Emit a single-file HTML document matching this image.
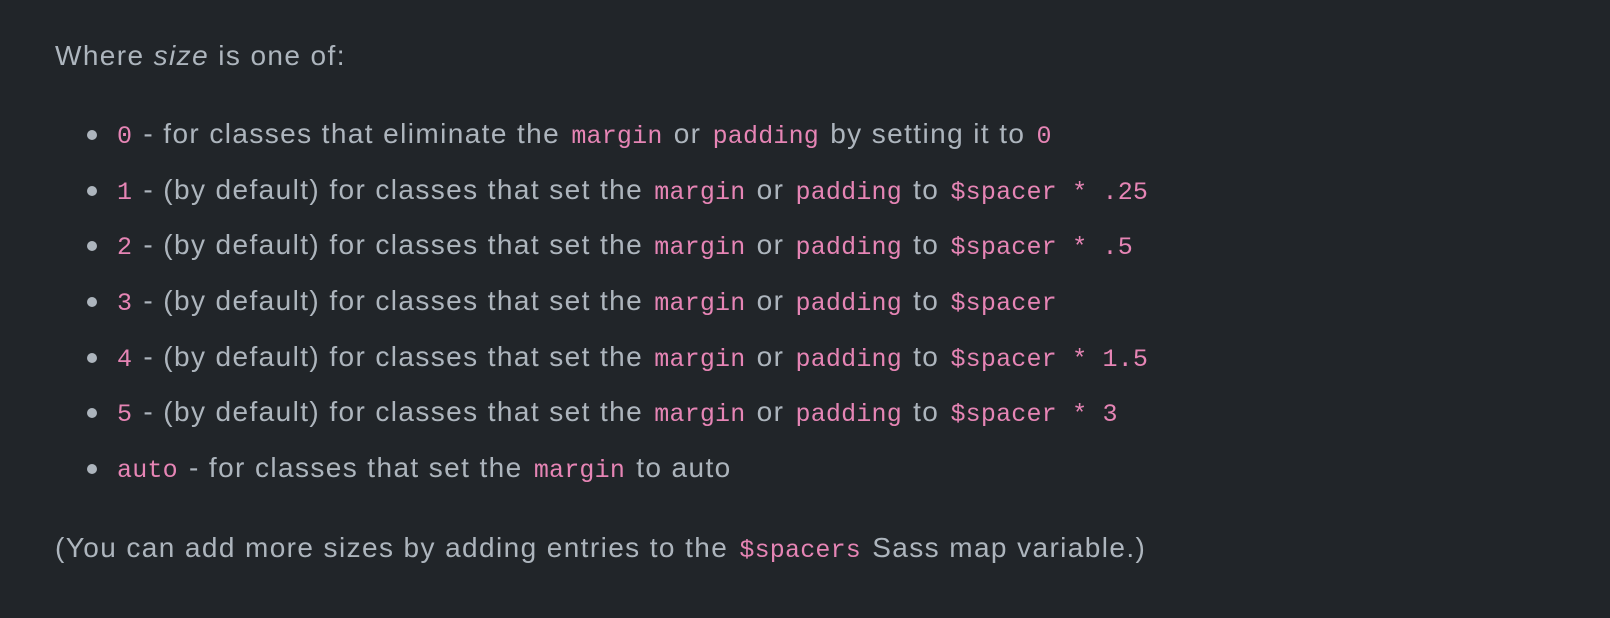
<!DOCTYPE html>
<html><head><meta charset="utf-8"><style>
html,body{margin:0;padding:0;background:#212529;width:1610px;height:618px;overflow:hidden}
body{font-family:"Liberation Sans",sans-serif;font-size:28px;color:#adb5bd;letter-spacing:1.4px}
p{position:absolute;left:55px;margin:0;line-height:32px;white-space:nowrap}
ul{position:absolute;left:0;top:0;margin:0;padding:0;list-style:none}
li{position:absolute;left:117px;white-space:nowrap;line-height:32px}
li::before{content:"";position:absolute;left:-30px;top:12px;width:10px;height:10px;border-radius:50%;background:#adb5bd}
code{font-family:"Liberation Mono",monospace;font-size:25px;color:#e685b5;letter-spacing:0.2px;padding:0 2px}
li code:first-child{padding-left:0}
</style></head><body>
<p style="top:40px">Where <i>size</i> is one of:</p>
<ul>
<li style="top:118px"><code>0</code> - for classes that eliminate the <code>margin</code> or <code>padding</code> by setting it to <code>0</code></li>
<li style="top:174px"><code>1</code> - (by default) for classes that set the <code>margin</code> or <code>padding</code> to <code>$spacer * .25</code></li>
<li style="top:229px"><code>2</code> - (by default) for classes that set the <code>margin</code> or <code>padding</code> to <code>$spacer * .5</code></li>
<li style="top:285px"><code>3</code> - (by default) for classes that set the <code>margin</code> or <code>padding</code> to <code>$spacer</code></li>
<li style="top:341px"><code>4</code> - (by default) for classes that set the <code>margin</code> or <code>padding</code> to <code>$spacer * 1.5</code></li>
<li style="top:396px"><code>5</code> - (by default) for classes that set the <code>margin</code> or <code>padding</code> to <code>$spacer * 3</code></li>
<li style="top:452px"><code>auto</code> - for classes that set the <code>margin</code> to auto</li>
</ul>
<p style="top:532px">(You can add more sizes by adding entries to the <code>$spacers</code> Sass map variable.)</p>
</body></html>
